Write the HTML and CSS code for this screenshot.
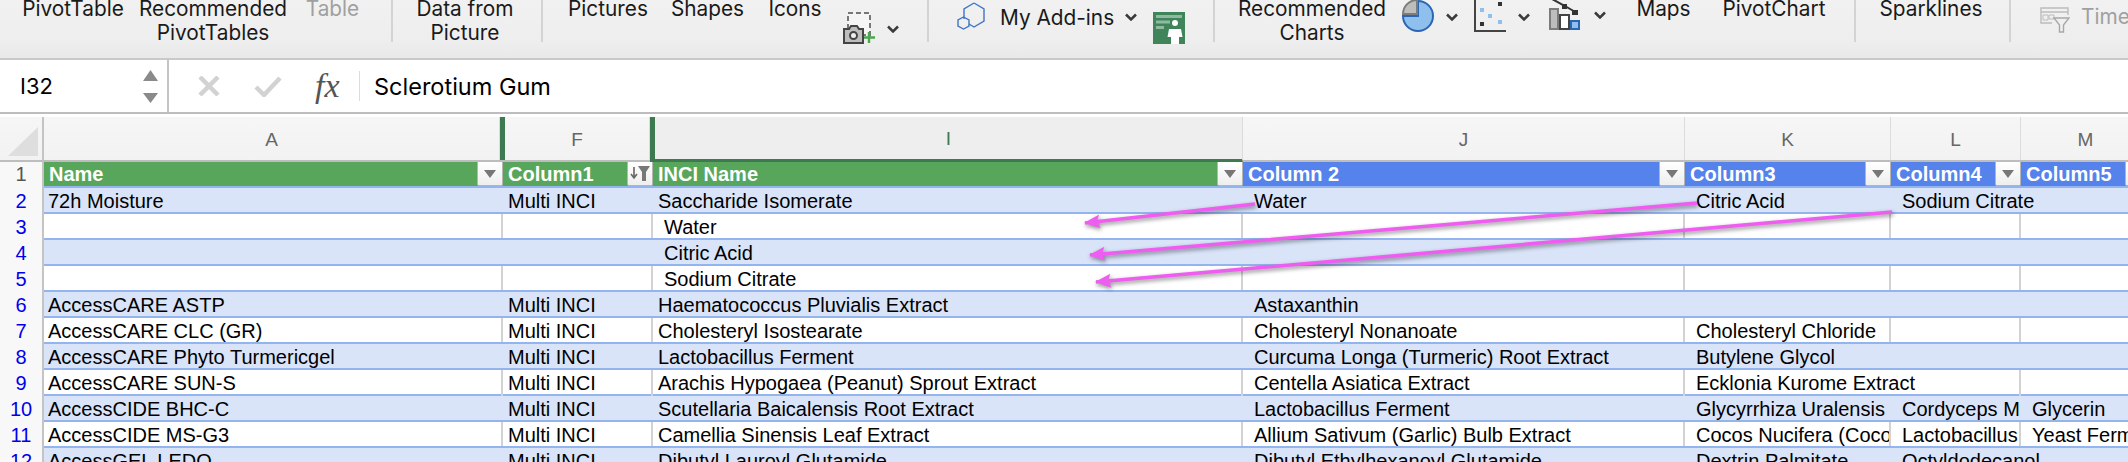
FILE: index.html
```html
<!DOCTYPE html>
<html>
<head>
  <meta charset="utf-8">
  <title>Ingredients - Excel</title>
  <link rel="stylesheet" href="styles.css">
</head>
<body>

<!-- ribbon -->
<div class="ribbon">
  <div class="lbl t-pivot">PivotTable</div>
  <div class="lbl t-rec">Recommended<br>PivotTables</div>
  <div class="lbl t-table off">Table</div>
  <div class="sep s-1"></div>
  <div class="lbl t-data">Data from<br>Picture</div>
  <div class="sep s-2"></div>
  <div class="lbl t-pics">Pictures</div>
  <div class="lbl t-shapes">Shapes</div>
  <div class="lbl t-icons">Icons</div>
  <svg class="ico i-cam" width="32" height="32" viewBox="0 0 32 32">
    <rect x="5" y="1" width="22" height="22" fill="#f5f5f5" stroke="#777" stroke-width="2" stroke-dasharray="5 3"/>
    <path d="M1 17h5l2-3h6l2 3h4v14H1z" fill="#bdbdbd" stroke="#444" stroke-width="2"/>
    <circle cx="10.5" cy="23.5" r="3.5" fill="#eee" stroke="#444" stroke-width="2"/>
    <path d="M26 20v11M21 25.5h11" stroke="#4aa64f" stroke-width="2.4"/>
  </svg>
  <svg class="chev c-cam" width="12" height="8" viewBox="0 0 12 8"><path d="M1 1.500l5 5 5-5" fill="none" stroke="#3a3a3a" stroke-width="2.5"/></svg>
  <div class="sep s-3"></div>
  <svg class="ico i-hex" width="28" height="28" viewBox="0 0 28 28">
    <path d="M17 1l10 6v12l-10 6-5-3" fill="none" stroke="#3f76c6" stroke-width="1.4"/>
    <path d="M7 17V7l10-6" fill="none" stroke="#3f76c6" stroke-width="1.4"/>
    <path d="M6.500 15l5.500 3v6l-5.500 3-5.500-3v-6z" fill="none" stroke="#3f76c6" stroke-width="1.4"/>
  </svg>
  <div class="lbl t-addins">My Add-ins</div>
  <svg class="chev c-add" width="12" height="8" viewBox="0 0 12 8"><path d="M1 1.500l5 5 5-5" fill="none" stroke="#3a3a3a" stroke-width="2.5"/></svg>
  <svg class="ico i-people" width="32" height="32" viewBox="0 0 32 32">
    <rect width="32" height="32" fill="#3f8559"/>
    <path d="M3 3h26v3H3zM3 8.500h14v3H3zM3 14h8v3H3z" fill="#8fb9a0"/>
    <circle cx="22" cy="11" r="3" fill="#fff"/>
    <path d="M16 17h12l1.500 8H26v7h-8v-7h-3.500z" fill="#fff"/>
  </svg>
  <div class="sep s-4"></div>
  <div class="lbl t-charts">Recommended<br>Charts</div>
  <svg class="ico i-pie" width="32" height="32" viewBox="0 0 32 32">
    <path d="M16 1a15 15 0 1 1-15 15h15z" fill="#8fbfec" stroke="#2a66b2" stroke-width="2"/>
    <path d="M15 0v14H1A14 14 0 0 1 15 0z" fill="#bdbdbb" stroke="#7c7c7c" stroke-width="2"/>
  </svg>
  <svg class="chev c-chart" width="12" height="8" viewBox="0 0 12 8"><path d="M1 1.500l5 5 5-5" fill="none" stroke="#3a3a3a" stroke-width="2.5"/></svg>
  <svg class="ico i-scatter" width="32" height="32" viewBox="0 0 32 32">
    <path d="M1 0v31h31" fill="none" stroke="#444" stroke-width="2"/>
    <rect x="24" y="2" width="4" height="4" fill="#333"/>
    <rect x="6" y="8" width="4" height="4" fill="#8fbfec"/>
    <rect x="14" y="14" width="4" height="4" fill="#8fbfec"/>
    <rect x="6" y="22" width="4" height="4" fill="#333"/>
    <rect x="24" y="20" width="4" height="4" fill="#8fbfec"/>
  </svg>
  <svg class="chev c-chart" width="12" height="8" viewBox="0 0 12 8"><path d="M1 1.500l5 5 5-5" fill="none" stroke="#3a3a3a" stroke-width="2.5"/></svg>
  <svg class="ico i-combo" width="32" height="30" viewBox="0 0 32 30">
    <rect x="2" y="9" width="8" height="20" fill="#bdbdbb" stroke="#7c7c7c" stroke-width="2"/>
    <rect x="12" y="15" width="9" height="14" fill="#fff" stroke="#444" stroke-width="2"/>
    <rect x="23" y="21" width="8" height="8" fill="#8fbfec" stroke="#2a66b2" stroke-width="2"/>
    <path d="M4 -1l13 7 12 7" fill="none" stroke="#333" stroke-width="2"/>
    <rect x="14" y="4" width="5" height="5" fill="#333"/>
    <rect x="24" y="10" width="6" height="5" fill="#333"/>
  </svg>
  <svg class="chev c-combo" width="12" height="8" viewBox="0 0 12 8"><path d="M1 1.500l5 5 5-5" fill="none" stroke="#3a3a3a" stroke-width="2.5"/></svg>
  <div class="lbl t-maps">Maps</div>
  <div class="lbl t-pchart">PivotChart</div>
  <div class="sep s-5"></div>
  <div class="lbl t-spark">Sparklines</div>
  <div class="sep s-6"></div>
  <svg class="ico i-time" width="30" height="26" viewBox="0 0 30 26">
    <path d="M1 13V1h27v7M1 5h27M1 13v3h11" fill="none" stroke="#bcbcbc" stroke-width="1.400"/>
    <path d="M3 8h5v5H3zM9 8h5v4H9z" fill="none" stroke="#bcbcbc"/>
    <path d="M14 11h15l-5.500 7v7h-4v-7z" fill="#f0f0f0" stroke="#a8a8a8" stroke-width="1.400"/>
  </svg>
  <div class="lbl t-time off">Time</div>
</div>

<!-- formula bar -->
<div class="fbar">
  <div class="namebox">
    <span>I32</span>
    <svg width="15" height="33" viewBox="0 0 15 33">
      <path d="M7.500 0L15 11H0z M0 23h15L7.500 33z" fill="#8a8a8a"/>
    </svg>
  </div>
  <svg class="f-x" width="22" height="20" viewBox="0 0 22 20"><path d="M2 1l18 18M20 1L2 19" stroke="#d2d2d2" stroke-width="4.500"/></svg>
  <svg class="f-ok" width="28" height="21" viewBox="0 0 28 21"><path d="M2 11l8 8L26 2" fill="none" stroke="#d2d2d2" stroke-width="4.500"/></svg>
  <span class="f-fx">fx</span>
  <div class="f-line"></div>
  <div class="f-text">Sclerotium Gum</div>
</div>

<!-- sheet -->
<div class="sheet">

  <div class="heads">
    <div class="corner"><div class="corner-tri"></div></div>
    <div class="head">A</div>
    <div class="head head-f">F</div>
    <div class="head head-i">I</div>
    <div class="head">J</div>
    <div class="head">K</div>
    <div class="head">L</div>
    <div class="head">M</div>
  </div>

  <div class="row row-top">
    <div class="num num-1">1</div>
    <div class="th green">Name<span class="btn"><i></i></span></div>
    <div class="th green">Column1<span class="btn btn-sort">
      <svg width="20" height="17" viewBox="0 0 20 17"><path d="M4 2v10M1 9l3 4 3-4" fill="none" stroke="#666" stroke-width="1.600"/><path d="M8 1h12l-4 6v9h-4V7z" fill="#777"/></svg>
    </span></div>
    <div class="th green">INCI Name<span class="btn"><i></i></span></div>
    <div class="th blue">Column 2<span class="btn"><i></i></span></div>
    <div class="th blue">Column3<span class="btn"><i></i></span></div>
    <div class="th blue">Column4<span class="btn"><i></i></span></div>
    <div class="th blue">Column5<span class="btn"><i></i></span></div>
  </div>

  <div class="row band">
    <div class="num">2</div><div class="c first">72h Moisture</div><div class="c">Multi INCI</div><div class="c">Saccharide Isomerate</div>
    <div class="c ind">Water</div><div class="c ind">Citric Acid</div><div class="c ind spill">Sodium Citrate</div><div class="c"></div>
  </div>
  <div class="row">
    <div class="num">3</div><div class="c first"></div><div class="c"></div><div class="c ind">Water</div>
    <div class="c"></div><div class="c"></div><div class="c"></div><div class="c"></div>
  </div>
  <div class="row band">
    <div class="num">4</div><div class="c first"></div><div class="c"></div><div class="c ind">Citric Acid</div>
    <div class="c"></div><div class="c"></div><div class="c"></div><div class="c"></div>
  </div>
  <div class="row">
    <div class="num">5</div><div class="c first"></div><div class="c"></div><div class="c ind">Sodium Citrate</div>
    <div class="c"></div><div class="c"></div><div class="c"></div><div class="c"></div>
  </div>
  <div class="row band">
    <div class="num">6</div><div class="c first">AccessCARE ASTP</div><div class="c">Multi INCI</div><div class="c">Haematococcus Pluvialis Extract</div>
    <div class="c ind">Astaxanthin</div><div class="c"></div><div class="c"></div><div class="c"></div>
  </div>
  <div class="row">
    <div class="num">7</div><div class="c first">AccessCARE CLC (GR)</div><div class="c">Multi INCI</div><div class="c">Cholesteryl Isostearate</div>
    <div class="c ind">Cholesteryl Nonanoate</div><div class="c ind">Cholesteryl Chloride</div><div class="c"></div><div class="c"></div>
  </div>
  <div class="row band">
    <div class="num">8</div><div class="c first">AccessCARE Phyto Turmericgel</div><div class="c">Multi INCI</div><div class="c">Lactobacillus Ferment</div>
    <div class="c ind">Curcuma Longa (Turmeric) Root Extract</div><div class="c ind">Butylene Glycol</div><div class="c"></div><div class="c"></div>
  </div>
  <div class="row">
    <div class="num">9</div><div class="c first">AccessCARE SUN-S</div><div class="c">Multi INCI</div><div class="c">Arachis Hypogaea (Peanut) Sprout Extract</div>
    <div class="c ind">Centella Asiatica Extract</div><div class="c ind spill">Ecklonia Kurome Extract</div><div class="c"></div><div class="c"></div>
  </div>
  <div class="row band">
    <div class="num">10</div><div class="c first">AccessCIDE BHC-C</div><div class="c">Multi INCI</div><div class="c">Scutellaria Baicalensis Root Extract</div>
    <div class="c ind">Lactobacillus Ferment</div><div class="c ind">Glycyrrhiza Uralensis</div><div class="c ind">Cordyceps M</div><div class="c ind">Glycerin</div>
  </div>
  <div class="row">
    <div class="num">11</div><div class="c first">AccessCIDE MS-G3</div><div class="c">Multi INCI</div><div class="c">Camellia Sinensis Leaf Extract</div>
    <div class="c ind">Allium Sativum (Garlic) Bulb Extract</div><div class="c ind">Cocos Nucifera (Coco</div><div class="c ind">Lactobacillus</div><div class="c ind">Yeast Ferm</div>
  </div>
  <div class="row band">
    <div class="num">12</div><div class="c first">AccessGEL LEDO</div><div class="c">Multi INCI</div><div class="c">Dibutyl Lauroyl Glutamide</div>
    <div class="c ind">Dibutyl Ethylhexanoyl Glutamide</div><div class="c ind">Dextrin Palmitate</div><div class="c ind spill">Octyldodecanol</div><div class="c"></div>
  </div>
</div>

<!-- pink arrows drawn over the sheet -->
<svg class="arrows" width="2128" height="462" viewBox="0 0 2128 462">
  <defs>
    <marker id="head" markerUnits="userSpaceOnUse" markerWidth="16" markerHeight="16" viewBox="0 0 16 16" refX="15" refY="8" orient="auto">
      <path d="M0 1L16 8 0 15 3 8z" fill="#ee5cf0"/>
    </marker>
  </defs>
  <line x1="1255" y1="204" x2="1085" y2="223" marker-end="url(#head)"/>
  <line x1="1697" y1="203" x2="1090" y2="255" marker-end="url(#head)"/>
  <line x1="1892" y1="212" x2="1096" y2="282" marker-end="url(#head)"/>
</svg>

</body>
</html>
```

FILE: styles.css
```css
html, body {
  margin: 0;
  height: 462px;
  overflow: hidden;
  background: #fff;
}
body {
  position: relative;
  font-family: "Liberation Sans", Arial, sans-serif;
  color: #000;
}

/* ribbon */
.ribbon {
  display: flex;
  align-items: flex-start;
  box-sizing: border-box;
  height: 60px;
  padding-left: 16px;
  overflow: hidden;
  background: linear-gradient(#f1f1f1, #eeeeee 70%, #e9e9e9);
  border-bottom: 2px solid #c9c9c9;
  font-family: Inter, "Liberation Sans", sans-serif;
  font-size: 20.800px;
  line-height: 24px;
  white-space: nowrap;
  color: #1a1a1a;
}
.ribbon > * {
  flex: none;
}
.lbl {
  margin-top: -3px;
  text-align: center;
}
.off {
  color: #a0a0a0;
}
.sep {
  width: 2px;
  height: 42px;
  background: #d3d3d3;
}
.t-pivot { width: 114px; }
.t-rec { width: 166px; }
.t-table { width: 73px; }
.s-1 { margin-left: 22px; }
.t-data { width: 144px; }
.s-2 { margin-left: 4px; }
.t-pics { width: 120px; margin-left: 5px; }
.t-shapes { width: 79px; }
.t-icons { width: 96px; }
.i-cam { margin-top: 12px; }
.chev { margin-top: 13px; }
.c-cam { margin: 25px 12px 0 12px; }
.s-3 { margin-left: 16px; }
.i-hex { margin: 2px 0 0 28px; }
.t-addins { width: 113px; margin: 6px 0 0 15px; text-align: left; }
.c-add { margin: 13px 12px 0 12px; }
.i-people { margin: 12px 0 0 4px; }
.s-4 { margin-left: 28px; }
.t-charts { width: 174px; margin-left: 10px; }
.i-pie { margin-left: 3px; }
.c-chart { margin-left: 12px; margin-right: 12px; }
.i-scatter { margin-left: 4px; }
.i-combo { margin-left: 6px; }
.c-combo { margin: 11px 14px 0 14px; }
.t-maps { width: 67px; margin-left: 10px; }
.t-pchart { width: 154px; }
.s-5 { margin-left: 3px; }
.t-spark { width: 150px; }
.s-6 { margin-left: 3px; }
.i-time { margin: 7px 0 0 29px; }
.t-time { margin: 5px 0 0 11px; }

/* formula bar */
.fbar {
  display: flex;
  align-items: center;
  box-sizing: border-box;
  height: 54px;
  border-bottom: 2px solid #bdbdbd;
  font-family: Inter, "Liberation Sans", sans-serif;
}
.namebox {
  display: flex;
  align-items: center;
  justify-content: space-between;
  box-sizing: border-box;
  width: 169px;
  height: 52px;
  padding: 0 9px 0 20px;
  border-right: 2px solid #c4c4c4;
  font-size: 22px;
}
.f-x { margin-left: 29px; }
.f-ok { margin-left: 34px; }
.f-fx {
  width: 30px;
  margin-left: 33px;
  font-family: "Liberation Serif", serif;
  font-style: italic;
  font-size: 34px;
  color: #555;
}
.f-line {
  width: 1px;
  height: 30px;
  margin-left: 14px;
  background: #dcdcdc;
}
.f-text {
  margin-left: 14px;
  font-size: 23.500px;
}

/* sheet */
.sheet {
  padding-top: 3px;
  font-size: 20px;
  width: 2151px;
}
.heads {
  display: grid;
  grid-template-columns: 44px 456px 150px 593px 442px 206px 130px 130px;
  height: 45px;
  box-sizing: border-box;
  border-bottom: 2px solid #bdbdbd;
  background: linear-gradient(#f6f6f6, #f2f2f2);
}
.corner {
  position: relative;
  border-right: 2px solid #c4c4c4;
}
.corner-tri {
  width: 30px;
  height: 29px;
  margin: 10px 0 0 8px;
  background: #dedede;
  clip-path: polygon(100% 0, 100% 100%, 0 100%);
}
.head {
  display: flex;
  align-items: center;
  justify-content: center;
  box-sizing: border-box;
  padding-top: 2px;
  border-right: 1px solid #dcdcdc;
  font-size: 19px;
  color: #666;
}
.head-f {
  border-left: 5px solid #3d7a50;
}
.head-i {
  border-left: 5px solid #3d7a50;
  border-bottom: 3px solid #3d7a50;
  margin-bottom: -2px;
  background: #eeeeee;
  color: #3d7a50;
}
.row {
  display: grid;
  grid-template-columns: 44px 459px 150px 590px 442px 206px 130px 130px;
  box-sizing: border-box;
  height: 26px;
  line-height: 26px;
  border-bottom: 2px solid #94b4ef;
}
.row-top {
  line-height: 24px;
}
.num {
  box-sizing: border-box;
  height: 26px;
  margin-bottom: -2px;
  border-right: 2px solid #c4c4c4;
  background: #f8f8f8;
  text-align: center;
  color: #0000ee;
}
.num-1 {
  color: #555;
}
.c {
  box-sizing: border-box;
  padding-left: 5px;
  overflow: hidden;
  white-space: nowrap;
  border-right: 2px solid #d2d2d2;
}
.first {
  padding-left: 4px;
}
.ind {
  padding-left: 11px;
}
.spill {
  overflow: visible;
  border-right: 0;
}
.band {
  background: #d9e4f9;
}
.band .c {
  border-right: 0;
}
.band .num {
  background: #f8f8f8;
}
.th {
  display: flex;
  justify-content: space-between;
  box-sizing: border-box;
  padding-left: 5px;
  font-weight: bold;
  color: #fff;
  white-space: nowrap;
}
.green { background: #58a55c; }
.blue { background: #5583eb; }
.btn {
  display: flex;
  align-items: center;
  justify-content: center;
  flex: none;
  box-sizing: border-box;
  width: 26px;
  height: 24px;
  background: linear-gradient(#fff, #eee);
  border: 1px solid #b5b5b5;
  border-top: 0;
  border-radius: 0 0 2px 2px;
}
.btn i {
  width: 0;
  height: 0;
  border-left: 6px solid transparent;
  border-right: 6px solid transparent;
  border-top: 8px solid #777;
}

/* arrows */
.arrows {
  position: absolute;
  left: 0;
  top: 0;
  filter: drop-shadow(1px 2px 2px rgba(0, 0, 0, .45));
}
.arrows line {
  stroke: #ee5cf0;
  stroke-width: 3.500;
}
```
